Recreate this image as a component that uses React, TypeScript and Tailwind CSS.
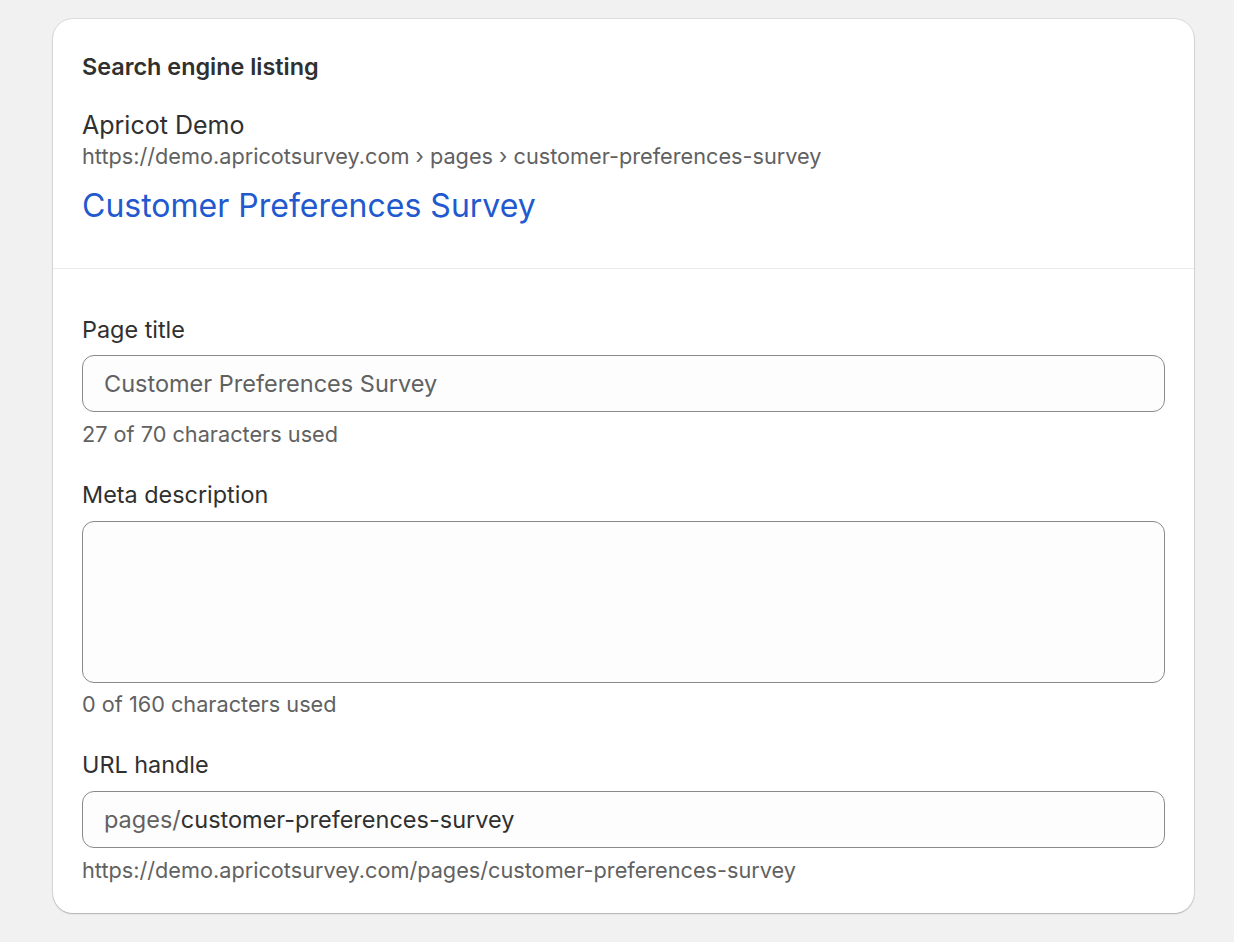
import React from "react";

export default function App() {
  return (
    <div
      className="min-h-[942px] w-full bg-[#f1f1f1] pt-[19px] pl-[53px] pr-[40px] pb-[29px]"
      style={{ fontFamily: "Inter, 'Noto Sans', sans-serif" }}
    >
      <div className="rounded-[20px] bg-white shadow-[0_1px_0_0_rgba(26,26,26,0.07),0_0_0_1px_rgba(0,0,0,0.08),0_1px_2px_rgba(0,0,0,0.15)] overflow-hidden">
        <div className="px-[29px] pt-[34px] pb-[42px] border-b border-[#ebebeb]">
          <h2 className="text-[23.4px] leading-[28px] font-semibold text-[#303030]">
            Search engine listing
          </h2>
          <div className="mt-[28px] text-[25px] leading-[32px] text-[#303030]">Apricot Demo</div>
          <div className="mt-[1px] text-[21.7px] leading-[28px] text-[#616161]">
            https://demo.apricotsurvey.com › pages › customer-preferences-survey
          </div>
          <div className="mt-[16px] text-[32px] leading-[40px] text-[#2259cf]">
            Customer Preferences Survey
          </div>
        </div>
        <div className="px-[29px] pt-[46px] pb-[29px]">
          <div>
            <label className="block text-[23.4px] leading-[30px] text-[#303030]">Page title</label>
            <div className="mt-[10px] h-[57px] rounded-[12px] border border-[#8a8a8a] bg-[#fdfdfd] flex items-center px-[21px]">
              <span className="text-[23.5px] text-[#616161]">Customer Preferences Survey</span>
            </div>
            <div className="mt-[8px] text-[21.7px] leading-[28px] text-[#616161]">27 of 70 characters used</div>
          </div>
          <div className="mt-[32px]">
            <label className="block text-[23.4px] leading-[30px] text-[#303030]">Meta description</label>
            <div className="mt-[11px] h-[162px] rounded-[12px] border border-[#8a8a8a] bg-[#fdfdfd]" />
            <div className="mt-[7px] text-[21.7px] leading-[28px] text-[#616161]">0 of 160 characters used</div>
          </div>
          <div className="mt-[32px]">
            <label className="block text-[23.4px] leading-[30px] text-[#303030]">URL handle</label>
            <div className="mt-[11px] h-[57px] rounded-[12px] border border-[#8a8a8a] bg-[#fdfdfd] flex items-center px-[21px]">
              <span className="text-[23.5px] text-[#616161]">pages/</span>
              <span className="text-[23.5px] text-[#303030]">customer-preferences-survey</span>
            </div>
            <div className="mt-[8px] text-[21.7px] leading-[28px] text-[#616161]">
              https://demo.apricotsurvey.com/pages/customer-preferences-survey
            </div>
          </div>
        </div>
      </div>
    </div>
  );
}
